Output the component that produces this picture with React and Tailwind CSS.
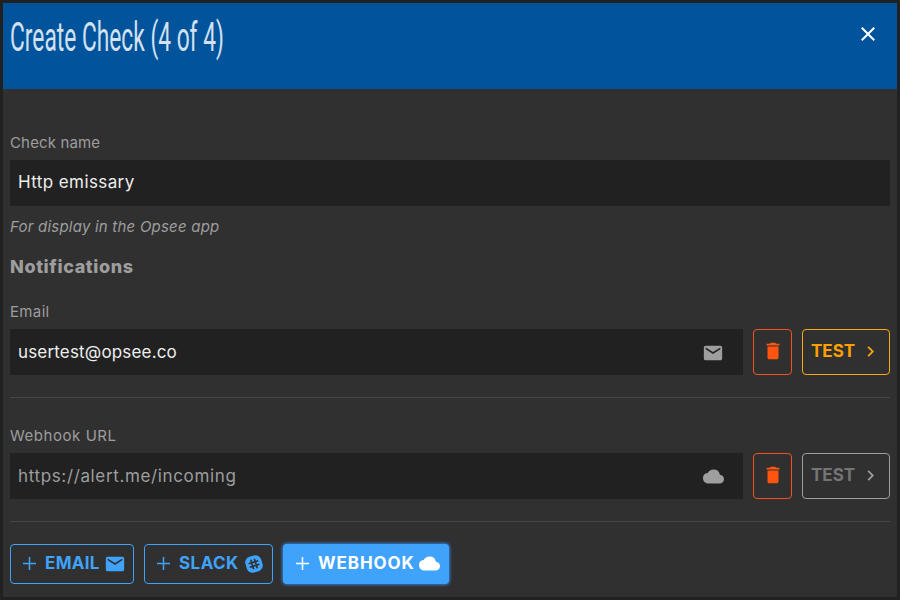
import React from "react";
import { MdChevronRight, MdClose, MdCloud, MdDelete, MdEmail } from "react-icons/md";

function PlusIcon() {
  return (
    <svg width="21" height="21" viewBox="0 0 21 21" className="mr-[5px] mb-px shrink-0">
      <path d="M4 10.5H17M10.5 4V17" stroke="currentColor" strokeWidth="1.5" fill="none" />
    </svg>
  );
}

function SlackIcon() {
  return (
    <svg width="18" height="18" viewBox="0 0 18 18" className="mb-px shrink-0">
      <g transform="rotate(-17 9 9)">
        <rect x="0.8" y="0.8" width="16.4" height="16.4" rx="5.8" fill="#3fa3fb" />
        <path d="M7.1 4V14M10.9 4V14M4 7.1H14M4 10.9H14" stroke="#303030" strokeWidth="1.6" fill="none" />
      </g>
    </svg>
  );
}

function Label({ children, className }) {
  return <div className={`h-5 text-[15px] leading-5 text-[#9e9e9e] ${className}`}>{children}</div>;
}

function NotificationRow({ icon, value, valueClass, testClass, textClass, chevronClass }) {
  return (
    <div className="flex h-[46px] gap-[10px]">
      <div className="flex w-[733px] items-center justify-between bg-[#212121] pr-[19px] pl-2">
        <span className={`mb-px text-[17px] leading-6 ${valueClass}`}>{value}</span>
        <span className="mt-px text-[#9e9e9e]">{icon}</span>
      </div>
      <button className="flex w-[39px] items-center justify-center rounded-[4px] border border-[#f4511e] pb-0.5 text-[#ff5510]">
        <MdDelete size={22} />
      </button>
      <button className={`flex w-[88px] items-center rounded-[4px] border pl-2 ${testClass}`}>
        <span className={`w-[49px] text-left text-[17px] font-bold ${textClass}`}>TEST</span>
        <MdChevronRight size={21} className={`mb-px shrink-0 ${chevronClass}`} />
      </button>
    </div>
  );
}

export default function App() {
  return (
    <div className="h-[600px] w-[900px] overflow-hidden bg-[#212121] p-[3px] font-['Inter','Open_Sans',sans-serif]">
      <div className="h-[594px] bg-[#303030]">
        <header className="flex h-[86px] items-start justify-between bg-[#01549b] pr-[17px] pl-[7px]">
          <h1 className="mt-[9px] w-[220px] origin-left scale-x-[0.555] font-['Roboto',sans-serif] text-[41px] leading-[50px] font-normal whitespace-nowrap text-[#d3e1f0]">
            Create Check (4 of 4)
          </h1>
          <MdClose size={24} className="mt-[19px] text-white" />
        </header>
        <main className="px-[7px] pt-11">
          <Label className="tracking-[0.15px]">Check name</Label>
          <div className="mt-[7px] flex h-[46px] items-center bg-[#212121] pb-px pl-2 text-[17px] text-[#eeeeee]">
            <span className="tracking-[0.4px]">Http emissary</span>
          </div>
          <p className="mt-[11px] h-5 text-[15px] leading-5 tracking-[0.22px] text-[#9e9e9e] italic">
            For display in the Opsee app
          </p>
          <h2 className="mt-[18px] h-6 text-[18px] leading-6 font-extrabold tracking-[0.6px] text-[#9e9e9e]">
            Notifications
          </h2>
          <Label className="mt-[23px] tracking-[0.35px]">Email</Label>
          <div className="mt-[7px]">
            <NotificationRow
              icon={<MdEmail size={22} />}
              value="usertest@opsee.co"
              valueClass="tracking-[0.17px] text-[#eeeeee]"
              testClass="border-[#ffa910]"
              textClass="text-[#ffa000]"
              chevronClass="text-[#ffa910]"
            />
          </div>
          <hr className="mt-[22px] border-[#464646]" />
          <Label className="mt-7 tracking-[0.55px]">Webhook URL</Label>
          <div className="mt-[7px]">
            <NotificationRow
              icon={<MdCloud size={21} />}
              value="https://alert.me/incoming"
              valueClass="tracking-[0.64px] text-[#9e9e9e]"
              testClass="border-[#9e9e9e]"
              textClass="text-[#757575]"
              chevronClass="text-[#9e9e9e]"
            />
          </div>
          <hr className="mt-[22px] border-[#464646]" />
          <div className="mt-[22px] flex h-10 gap-[10px] text-[17px] font-bold text-[#3fa3fb]">
            <button className="flex w-[124px] items-center rounded-[4px] border border-[#3fa3fb] pl-2">
              <PlusIcon />
              <span className="w-[59px] text-left tracking-[0.3px]">EMAIL</span>
              <MdEmail size={22} className="mb-px shrink-0" />
            </button>
            <button className="flex w-[129px] items-center rounded-[4px] border border-[#3fa3fb] pl-2">
              <PlusIcon />
              <span className="w-[66px] text-left tracking-[0.45px]">SLACK</span>
              <SlackIcon />
            </button>
            <button className="flex w-[166px] items-center rounded-[4px] bg-[#3fa3fb] pl-[9px] text-white shadow-[0_0_3px_1px_#2f7fd0]">
              <PlusIcon />
              <span className="w-[101px] text-left tracking-[0.9px]">WEBHOOK</span>
              <MdCloud size={21} className="mb-px shrink-0" />
            </button>
          </div>
        </main>
      </div>
    </div>
  );
}
